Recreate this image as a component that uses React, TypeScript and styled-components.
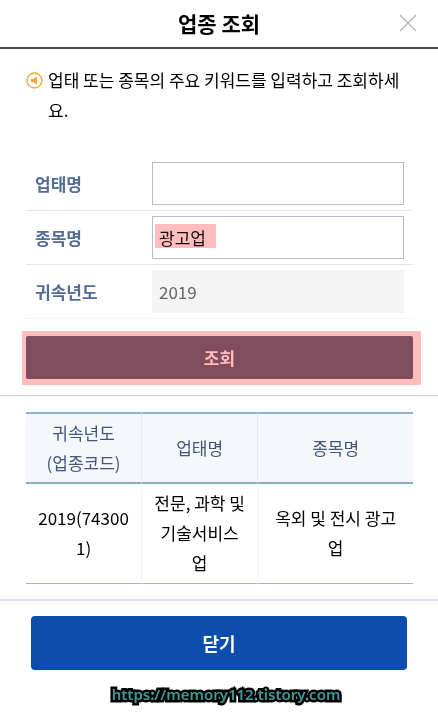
import React, { useState } from 'react';
import styled, { createGlobalStyle, css } from 'styled-components';

const GlobalStyle = createGlobalStyle`
  *, *::before, *::after { box-sizing: border-box; }
  body {
    margin: 0;
    background: #fff;
    color: #111;
    font-family: "Noto Sans CJK KR", "Noto Sans", sans-serif;
    font-size: 17px;
    line-height: 30px;
  }
  button, input { font: inherit; }
`;

const Dialog = styled.main`
  display: flex;
  flex-direction: column;
`;

const Header = styled.header`
  display: grid;
  grid-template-columns: 40px 1fr 40px;
  align-items: center;
  padding: 0 10px 2px;
  height: 49px;
  border-bottom: 2px solid #4a4a4a;
`;

const Title = styled.h1`
  grid-column: 2;
  margin: 0;
  text-align: center;
  font-size: 21px;
  font-weight: 700;
  color: #000;
`;

const CloseIcon = styled.button`
  display: flex;
  align-items: center;
  justify-content: center;
  padding: 0;
  height: 40px;
  border: 0;
  background: none;
  cursor: pointer;
`;

const Section = styled.section`
  padding: 16px 25px 10px 26px;
  border-bottom: 1px solid #c8cfe2;
`;

const Notice = styled.p`
  display: flex;
  gap: 5px;
  margin: 0 0 32px;
  color: #000;
  svg { flex: none; margin-top: 7px; }
`;

const Row = styled.div<{ $faint?: boolean }>`
  display: grid;
  grid-template-columns: 117px 1fr;
  align-items: center;
  padding: 5px 9px;
  border-bottom: 1px solid ${p => (p.$faint ? '#f3f4f6' : '#e1e6ef')};
`;

const Label = styled.label`
  font-weight: 700;
  color: #526c96;
`;

const Field = styled.div`
  position: relative;
  display: flex;
`;

const TextInput = styled.input`
  width: 100%;
  min-width: 0;
  height: 43px;
  padding: 0 6px;
  border: 1px solid #b8bbc6;
  border-radius: 0;
  background: #fff;
  color: #111;
  outline: 0;
  &:disabled {
    border-color: #f4f4f4;
    background: #f4f4f4;
    color: #666;
  }
`;

const highlight = css`
  background: #ffbdbd;
`;

const FieldMark = styled.span`
  ${highlight}
  position: absolute;
  left: 3px;
  top: 8px;
  width: 61px;
  height: 24px;
  mix-blend-mode: multiply;
  pointer-events: none;
`;

const SearchMark = styled.div`
  ${highlight}
  display: flex;
  margin: 12px -8px 0 -4px;
  padding: 5px 8px 6px 4px;
`;

const ActionButton = styled.button<{ $marked?: boolean }>`
  flex: 1;
  height: ${p => (p.$marked ? '43px' : '54px')};
  padding: 0;
  border: 0;
  border-radius: ${p => (p.$marked ? '2px' : '4px')};
  background: ${p => (p.$marked ? '#814c5e' : '#0d4dad')};
  color: ${p => (p.$marked ? '#ffbdbd' : '#fff')};
  font-size: ${p => (p.$marked ? '17px' : '18px')};
  font-weight: 700;
  cursor: pointer;
`;

const Results = styled.section`
  padding: 16px 25px 15px 26px;
  border-bottom: 2px solid #d9e1ed;
`;

const Table = styled.table`
  width: 100%;
  table-layout: fixed;
  border-collapse: separate;
  border-spacing: 0;
  text-align: center;
`;

const Column = styled.col<{ $share: number }>`
  width: ${p => p.$share}%;
`;

const HeadCell = styled.th`
  padding: 4px 12px;
  border-top: 2px solid #8fafdd;
  border-bottom: 2px solid #8aa8d8;
  border-right: 1px solid #e4e8f1;
  background: #f5f7fb;
  color: #42567c;
  font-weight: 400;
  &:last-child { border-right: 0; }
`;

const Cell = styled.td`
  padding: 4px 12px 5px;
  border-bottom: 1px solid #adb3bf;
  border-right: 1px solid #f0f2f9;
  color: #000;
  word-break: break-all;
  &:last-child { border-right: 0; }
`;

const Footer = styled.footer`
  display: flex;
  padding: 15px 31px 12px;
`;

const Source = styled.a`
  align-self: center;
  margin-left: 14px;
  font-family: "Noto Sans", sans-serif;
  font-size: 15px;
  line-height: 24px;
  font-weight: 600;
  color: #3f9a96;
  text-decoration: none;
  -webkit-text-stroke: 5px #000;
  paint-order: stroke fill;
  stroke-linejoin: round;
`;

const SpeakerIcon = () => (
  <svg width="17" height="17" viewBox="0 0 17 17" aria-hidden="true">
    <circle cx="8.5" cy="8.5" r="7.4" fill="none" stroke="#f8b04c" strokeWidth="1.6" />
    <path d="M5 7h2l4-2.5v8L7 10H5z" fill="#f5a436" />
  </svg>
);

const CrossIcon = () => (
  <svg width="18" height="18" viewBox="0 0 18 18" aria-hidden="true">
    <path d="M1 1l16 16M17 1L1 17" stroke="#aeb1c0" strokeWidth="1.3" fill="none" />
  </svg>
);

export default function App() {
  const [category, setCategory] = useState('');
  const [item, setItem] = useState('광고업');

  return (
    <>
      <GlobalStyle />
      <Dialog>
        <Header>
          <Title>업종 조회</Title>
          <CloseIcon type="button" aria-label="닫기"><CrossIcon /></CloseIcon>
        </Header>
        <Section>
          <Notice>
            <SpeakerIcon />
            <span>업태 또는 종목의 주요 키워드를 입력하고 조회하세요.</span>
          </Notice>
          <Row>
            <Label htmlFor="category">업태명</Label>
            <Field>
              <TextInput id="category" value={category} onChange={e => setCategory(e.target.value)} />
            </Field>
          </Row>
          <Row>
            <Label htmlFor="item">종목명</Label>
            <Field>
              <TextInput id="item" value={item} onChange={e => setItem(e.target.value)} />
              <FieldMark />
            </Field>
          </Row>
          <Row $faint>
            <Label htmlFor="year">귀속년도</Label>
            <Field>
              <TextInput id="year" value="2019" disabled readOnly />
            </Field>
          </Row>
          <SearchMark>
            <ActionButton type="button" $marked>조회</ActionButton>
          </SearchMark>
        </Section>
        <Results>
          <Table>
            <colgroup>
              <Column $share={30} />
              <Column $share={30} />
              <Column $share={40} />
            </colgroup>
            <thead>
              <tr>
                <HeadCell scope="col">귀속년도<br />(업종코드)</HeadCell>
                <HeadCell scope="col">업태명</HeadCell>
                <HeadCell scope="col">종목명</HeadCell>
              </tr>
            </thead>
            <tbody>
              <tr>
                <Cell>2019(743001)</Cell>
                <Cell>전문, 과학 및 기술서비스업</Cell>
                <Cell>옥외 및 전시 광고업</Cell>
              </tr>
            </tbody>
          </Table>
        </Results>
        <Footer>
          <ActionButton type="button">닫기</ActionButton>
        </Footer>
        <Source href="https://memory112.tistory.com">https://memory112.tistory.com</Source>
      </Dialog>
    </>
  );
}
